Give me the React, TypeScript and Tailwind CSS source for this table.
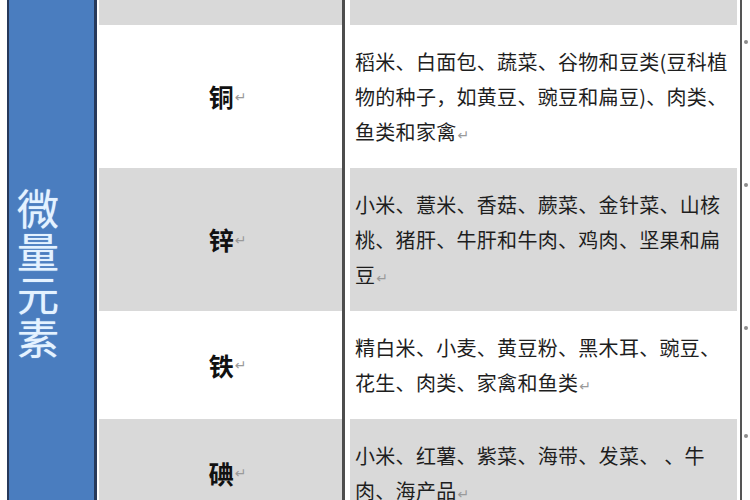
import React from "react";

const Mark = () => (
  <span className="text-[14px] leading-none text-[#9a9a9a] ml-[1px] align-baseline" style={{ fontFamily: '"DejaVu Sans", sans-serif' }}>
    ↵
  </span>
);

type Row = { label: string; lines: string[]; shaded: boolean };

const rows: Row[] = [
  {
    label: "铜",
    lines: ["稻米、白面包、蔬菜、谷物和豆类(豆科植", "物的种子，如黄豆、豌豆和扁豆)、肉类、", "鱼类和家禽"],
    shaded: false,
  },
  {
    label: "锌",
    lines: ["小米、薏米、香菇、蕨菜、金针菜、山核", "桃、猪肝、牛肝和牛肉、鸡肉、坚果和扁", "豆"],
    shaded: true,
  },
  {
    label: "铁",
    lines: ["精白米、小麦、黄豆粉、黑木耳、豌豆、", "花生、肉类、家禽和鱼类"],
    shaded: false,
  },
  {
    label: "碘",
    lines: ["小米、红薯、紫菜、海带、发菜、 、牛", "肉、海产品"],
    shaded: true,
  },
];

export default function App() {
  return (
    <div
      className="w-[750px] h-[500px] overflow-hidden bg-white flex pl-[7px]"
      style={{ fontFamily: '"Noto Sans CJK SC", "Noto Sans", sans-serif' }}
    >
      {/* Blue rowspan column */}
      <div className="w-[90px] shrink-0 bg-[#4a7dbf] border-l-[2px] border-r-[3px] border-[#27395a] flex flex-col items-start pl-[8px] pt-[185px] text-[42px] leading-[43px] text-[#e4f2ff]">
        {"微量元素".split("").map((c) => (
          <div key={c} style={{ textShadow: "0 0 1px #b8d8f5" }}>
            {c}
          </div>
        ))}
      </div>

      {/* Table body */}
      <div className="ml-[2px] w-[651px] shrink-0 flex flex-col">
        {/* Tail of the previous row */}
        <div className="flex h-[25px] shrink-0">
          <div className="w-[246px] shrink-0 bg-[#d9d9d9] border-r-[3px] border-[#4d4d4d]" />
          <div className="w-[397px] shrink-0 pl-[5px] pr-[3px] border-r-[2px] border-[#555]">
            <div className="h-full bg-[#d9d9d9]" />
          </div>
          <div className="w-[8px] shrink-0" />
        </div>

        {rows.map((r) => (
          <div key={r.label} className="flex shrink-0">
            <div
              className={`w-[246px] shrink-0 border-r-[3px] border-[#4d4d4d] flex items-center justify-center pl-[14px] ${
                r.shaded ? "bg-[#d9d9d9]" : "bg-white"
              }`}
            >
              <span className="text-[25px] font-bold text-[#111] leading-none">{r.label}</span>
              <Mark />
            </div>
            <div className="w-[397px] shrink-0 pl-[5px] pr-[3px] border-r-[2px] border-[#555]">
              <div
                className={`h-full pl-[5px] pt-[19px] pb-[19px] text-[20px] leading-[35px] tracking-[0.3px] text-[#1e1e1e] whitespace-pre ${
                  r.shaded ? "bg-[#d9d9d9]" : "bg-white"
                }`}
              >
                {r.lines.map((l, i) => (
                  <div key={i}>
                    {l}
                    {i === r.lines.length - 1 && <Mark />}
                  </div>
                ))}
              </div>
            </div>
            <div className="w-[8px] shrink-0 flex justify-center pt-[15px]">
              <div className="w-[4px] h-[4px] rounded-full bg-[#8c8c8c]" />
            </div>
          </div>
        ))}
      </div>
    </div>
  );
}
